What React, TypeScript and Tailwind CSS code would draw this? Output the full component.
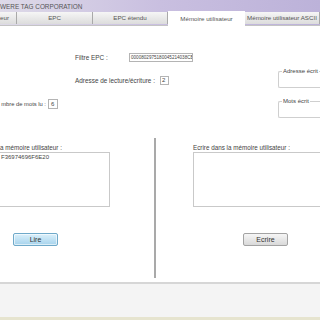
import React from 'react';

const TABS = [
  { label: 'eur', w: 'w-[17px]', active: false, clip: true },
  { label: 'EPC', w: 'w-[76px]', active: false },
  { label: 'EPC étendu', w: 'w-[75px]', active: false },
  { label: 'Mémoire utilisateur', w: 'w-[77px]', active: true },
  { label: 'Mémoire utilisateur ASCII', w: 'w-[75px]', active: false },
];

function GroupBox({ label, className }: { label: string; className: string }) {
  return (
    <div className={`relative h-[17px] border-y border-l border-[#cfcfcf] rounded-l-[2px] ${className}`}>
      <span className="absolute -top-[4px] left-[3px] bg-white px-[1px] text-[6px] leading-[7px] whitespace-nowrap">
        {label}
      </span>
    </div>
  );
}

export default function App() {
  return (
    <div className="w-[320px] h-[320px] overflow-hidden bg-white flex flex-col font-['Liberation_Sans',Arial,sans-serif] text-[#444]">
      {/* title + tab strip */}
      <div className="h-[26px] shrink-0 bg-gradient-to-r from-[#dedae8] via-[#c9bfe0] to-[#bcb2d9] flex flex-col">
        <div className="h-[12px] pt-[3px] text-[6.4px] leading-[8px] text-[#555] whitespace-nowrap">
          WERE TAG CORPORATION
        </div>
        <div className="h-[14px] flex items-end border-b border-[#c4c4c4]">
          {TABS.map((t) =>
            t.active ? (
              <div
                key={t.label}
                className={`${t.w} shrink-0 h-[15px] -mb-[1px] bg-white flex items-center justify-center text-[6.2px] text-[#555] whitespace-nowrap`}
              >
                {t.label}
              </div>
            ) : (
              <div
                key={t.label}
                className={`${t.w} shrink-0 h-[12px] mb-[1px] bg-gradient-to-b from-[#f6f6f6] to-[#dcdcdc] border-r border-[#a9a9a9] flex items-center ${
                  t.clip ? 'justify-start' : 'justify-center'
                } text-[6.2px] text-[#555] whitespace-nowrap`}
              >
                {t.label}
              </div>
            ),
          )}
        </div>
      </div>

      {/* content */}
      <div className="h-[256px] shrink-0 flex flex-col">
        <div className="h-[112px] flex">
          <div className="flex-1 flex flex-col">
            <div className="mt-[27px] ml-[75px] flex items-center">
              <span className="w-[54px] text-[6.4px] leading-[8px] whitespace-nowrap">Filtre EPC :</span>
              <div className="w-[64px] h-[9px] border border-[#b4b4b4] pl-[1px] text-[4.6px] leading-[7px] overflow-hidden whitespace-nowrap">
                0000802975180045214038CB
              </div>
            </div>
            <div className="mt-[14px] ml-[75px] flex items-center gap-[3px]">
              <span className="w-[82px] text-[6.4px] leading-[8px] whitespace-nowrap">
                Adresse de lecture/écriture :
              </span>
              <div className="w-[9px] h-[9px] border border-[#b4b4b4] pl-[1px] text-[6px] leading-[7px]">2</div>
            </div>
            <div className="mt-[14px] w-[58px] flex items-center justify-end gap-[2px]">
              <span className="shrink-0 text-[5.8px] leading-[8px] whitespace-nowrap">mbre de mots lu :</span>
              <div className="w-[10px] h-[10px] shrink-0 border border-[#b4b4b4] pl-[2px] text-[6px] leading-[8px]">6</div>
            </div>
          </div>
          <div className="w-[42px] flex flex-col">
            <GroupBox label="Adresse écrit" className="mt-[45px]" />
            <GroupBox label="Mots écrit" className="mt-[13px]" />
          </div>
        </div>

        <div className="h-[144px] flex">
          <div className="w-[154px] shrink-0 flex flex-col">
            <span className="mt-[7px] h-[6px] text-[6.3px] leading-[6px] whitespace-nowrap">
              a mémoire utilisateur :
            </span>
            <div className="mt-[1px] ml-[-2px] w-[112px] h-[55px] border border-[#c9c9c9] pl-[2px] pt-[1px] text-[6px] leading-[7px]">
              F36974696F6E20
            </div>
            <button className="mt-[26px] ml-[13px] w-[45px] h-[13px] rounded-[2px] border border-[#6fa9c9] bg-gradient-to-b from-[#dbf0fb] to-[#a6d3ec] text-[7px] leading-[11px] text-[#333] shadow-[inset_0_0_0_1px_rgba(255,255,255,0.6)]">
              Lire
            </button>
          </div>
          <div className="w-[2px] h-[140px] shrink-0 bg-[#a9a9a9]" />
          <div className="flex-1 min-w-0 flex flex-col pl-[37px]">
            <span className="mt-[7px] h-[6px] text-[6.3px] leading-[6px] whitespace-nowrap">
              Ecrire dans la mémoire utilisateur :
            </span>
            <div className="mt-[1px] w-[140px] shrink-0 h-[55px] border border-[#c9c9c9]" />
            <button className="mt-[26px] ml-[50px] w-[45px] h-[13px] rounded-[2px] border border-[#a3a3a3] bg-gradient-to-b from-[#f6f6f6] to-[#d9d9d9] text-[7px] leading-[11px] text-[#333]">
              Ecrire
            </button>
          </div>
        </div>
      </div>

      {/* status area */}
      <div className="h-[38px] shrink-0 border-t-2 border-[#d6d6d6] bg-[#f4f4f4] border-b-[3px] border-b-[#e6e4cf]" />
    </div>
  );
}
